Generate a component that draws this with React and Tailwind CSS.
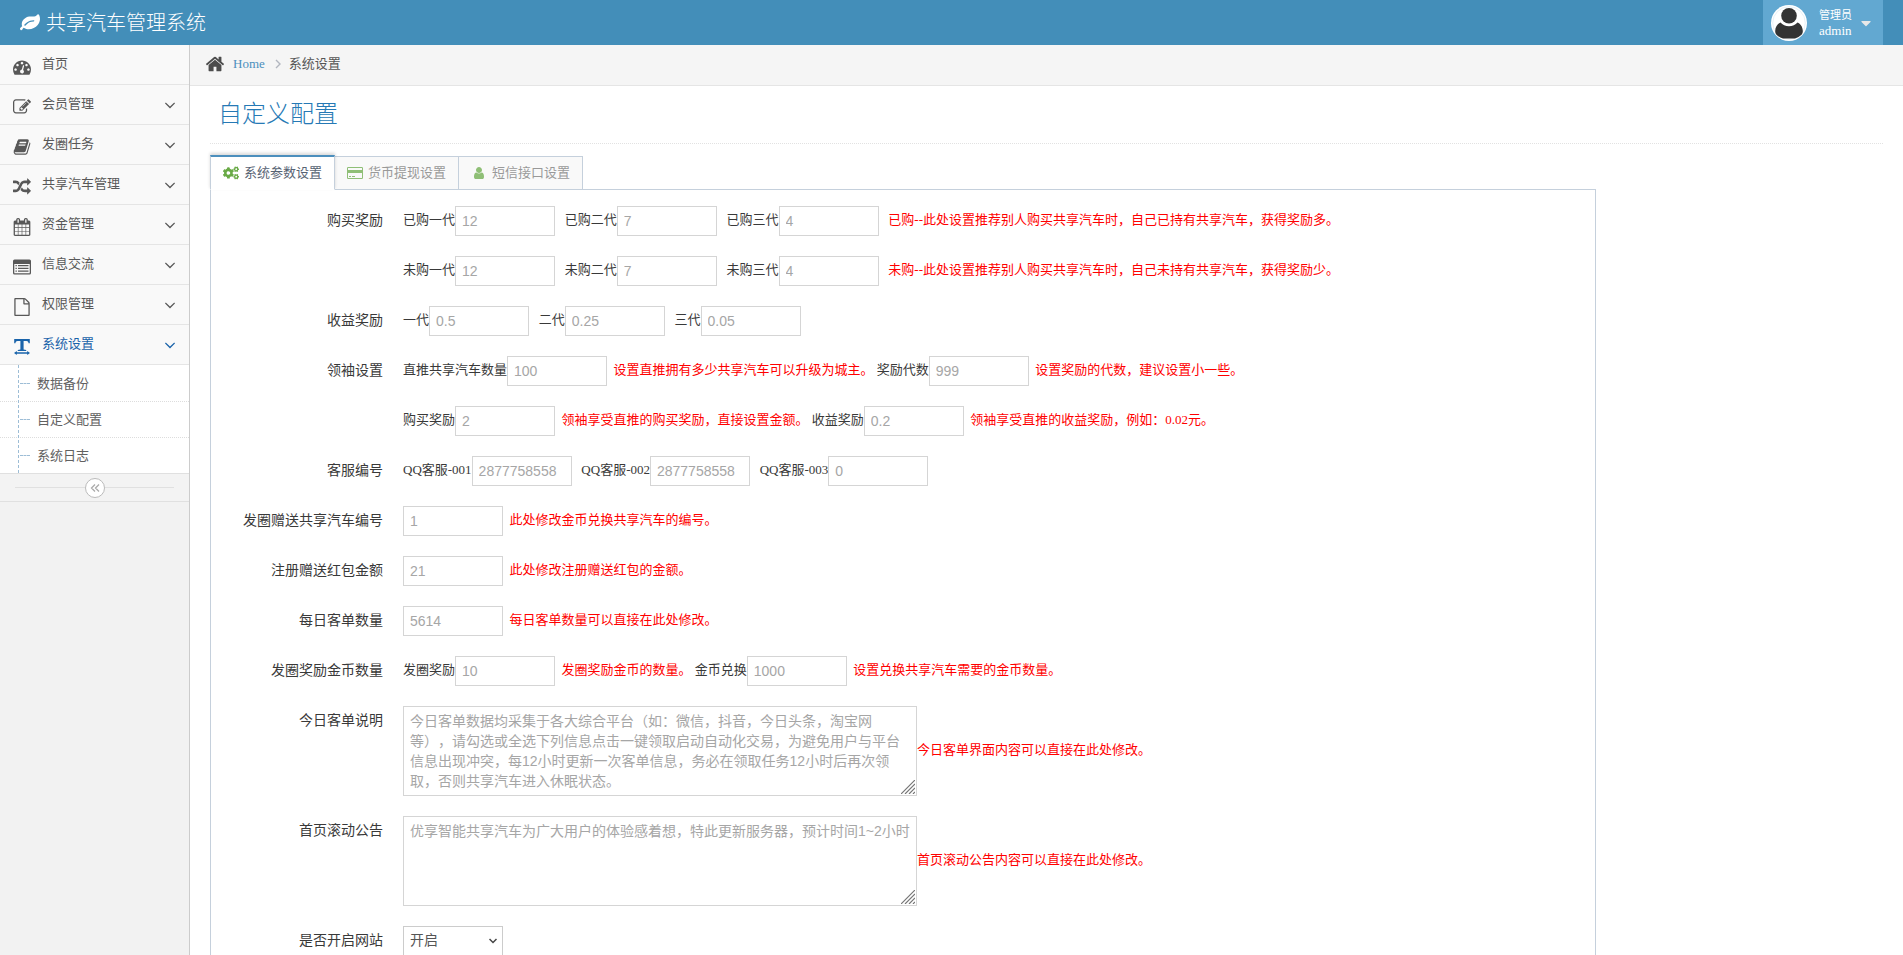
import { useState } from 'react';
import { FaCogs, FaCaretDown } from 'react-icons/fa';

const Glyph = ({ d, className, viewBox = '0 0 1792 1792' }) => (
    <svg viewBox={viewBox} fill="currentColor" className={className} aria-hidden="true">
        <path d={d} />
    </svg>
);

const paths = {
    leaf: 'M1280 704q0-26-19-45t-45-19q-172 0-318 49.5T638.5 822 403 1037q-19 21-19 45 0 26 19 45t45 19q24 0 45-19 27-24 74-71t67-66q137-124 268.5-176t313.5-52q26 0 45-19t19-45zm512-198q0 95-20 193-46 224-184.5 383T1230 1350q-214 108-438 108-148 0-286-47-15-5-88-42t-96-37q-16 0-39.5 32t-45 70-52.5 70-60 32q-43 0-63.5-17.5T15 1459q-2-4-6-11t-5.5-10-3-9.5T-1 1415q0-35 31-73.5t68-65.5 68-56 31-48q0-4-14-38t-16-44q-9-51-9-104 0-115 43.5-220t119-184.5 170.5-139T696 347q55-18 145-25.5t179.5-9 178.5-6 163.5-24T1471 220l29.5-29.5 29.5-28 27-20 36.5-16T1637 122q39 0 70.5 46t47.5 112 24 124 8 102z',
    dashboard: 'M384 1152q0-53-37.5-90.5T256 1024t-90.5 37.5T128 1152t37.5 90.5T256 1280t90.5-37.5T384 1152zm192-448q0-53-37.5-90.5T448 576t-90.5 37.5T320 704t37.5 90.5T448 832t90.5-37.5T576 704zm428 481l101-382q6-26-7.5-48.5T1059 725t-48 6.5-30 39.5l-101 382q-60 5-107 43.5t-63 98.5q-20 77 20 146t117 89 146-20 89-117q16-60-6-117t-72-91zm660-33q0-53-37.5-90.5T1536 1024t-90.5 37.5T1408 1152t37.5 90.5 90.5 37.5 90.5-37.5 37.5-90.5zm-640-640q0-53-37.5-90.5T896 384t-90.5 37.5T768 512t37.5 90.5T896 640t90.5-37.5T1024 512zm448 192q0-53-37.5-90.5T1344 576t-90.5 37.5T1216 704t37.5 90.5T1344 832t90.5-37.5T1472 704zm320 448q0 261-141 483-19 29-54 29H195q-35 0-54-29Q0 1414 0 1152q0-182 71-348t191-286 286-191 348-71 348 71 286 191 191 286 71 348z',
    edit: 'M888 1184l116-116-152-152-116 116v56h96v96h56zm440-720q-16-16-33 1L945 815q-17 17-1 33t33-1l350-350q17-17 1-33zm80 594v190q0 119-84.5 203.5T1120 1536H288q-119 0-203.5-84.5T0 1248V416q0-119 84.5-203.5T288 128h832q63 0 117 25 15 7 18 23 3 17-9 29l-49 49q-14 14-32 8-23-6-45-6H288q-66 0-113 47t-47 113v832q0 66 47 113t113 47h832q66 0 113-47t47-113v-126q0-13 9-22l64-64q15-15 35-7t20 29zm-96-738l288 288-672 672H640V992zm444 132l-92 92-288-288 92-92q28-28 68-28t68 28l152 152q28 28 28 68t-28 68z',
    book: 'M1703 478q40 57 18 129l-275 906q-19 64-76.5 107.5T1247 1664H324q-77 0-148.5-53.5T76 1479q-24-67-2-127 0-4 3-27t4-37q1-8-3-21.5t-3-19.5q2-11 8-21t16.5-23.5T116 1179q23-38 45-91.5t30-91.5q3-10 .5-30t-.5-28q3-11 17-28t17-23q21-36 42-92t25-90q1-9-2.5-32t.5-28q4-13 22-30.5t22-22.5q19-26 42.5-84.5T404 411q1-8-3-25.5t-2-26.5q2-8 9-18t18-23 17-21q8-12 16.5-30.5t15-35 16-36 19.5-32 26.5-23.5 36-11.5T620 134l-1 3q38-9 51-9h761q74 0 114 56t18 130l-274 906q-36 119-71.5 153.5T1089 1408H220q-27 0-38 15-11 16-1 43 24 70 144 70h923q29 0 56-15.5t35-41.5l300-987q7-22 5-57 38 15 59 43zm-1064 2q-4 13 2 22.5t20 9.5h608q13 0 25.5-9.5T1311 480l21-64q4-13-2-22.5t-20-9.5H702q-13 0-25.5 9.5T660 416zm-83 256q-4 13 2 22.5t20 9.5h608q13 0 25.5-9.5T1228 736l21-64q4-13-2-22.5t-20-9.5H619q-13 0-25.5 9.5T577 672z',
    random: 'M666 481q-60 92-137 273-22-45-37-72.5T451.5 618t-51-56.5-63-35T256 512H32q-14 0-23-9t-9-23V288q0-14 9-23t23-9h224q250 0 410 225zm1126 799q0 14-9 23l-320 320q-9 9-23 9-13 0-22.5-9.5T1408 1600v-192q-32 0-85 .5t-81 1-73-1-71-5-64-10.5-63-18.5-58-28.5-59-40-55-53.5-56-69.5q59-93 136-273 22 45 37 72.5t40.5 63.5 51 56.5 63 35 81.5 14.5h256V960q0-14 9-23t23-9q12 0 24 10l319 319q9 9 9 23zm0-896q0 14-9 23l-320 320q-9 9-23 9-13 0-22.5-9.5T1408 704V512h-256q-48 0-87 15t-69 45-51 61.5-45 77.5q-32 62-78 171-29 66-49.5 111t-54 105-64 100-74 83-90 68.5-106.5 42-128 16.5H32q-14 0-23-9t-9-23v-192q0-14 9-23t23-9h224q48 0 87-15t69-45 51-61.5 45-77.5q32-62 78-171 29-66 49.5-111t54-105 64-100 74-83 90-68.5 106.5-42 128-16.5h256V64q0-14 9-23t23-9q12 0 24 10l319 319q9 9 9 23z',
    calendar: 'M192 1664h288v-288H192v288zm352 0h320v-288H544v288zM192 1312h288V992H192v320zm352 0h320V992H544v320zM192 928h288V640H192v288zm736 736h320v-288H928v288zM544 928h320V640H544v288zm768 736h288v-288h-288v288zm-384-352h320V992H928v320zM576 448V160q0-13-9.5-22.5T544 128h-64q-13 0-22.5 9.5T448 160v288q0 13 9.5 22.5T480 480h64q13 0 22.5-9.5T576 448zm736 864h288V992h-288v320zM928 928h320V640H928v288zm384 0h288V640h-288v288zm32-480V160q0-13-9.5-22.5T1312 128h-64q-13 0-22.5 9.5T1216 160v288q0 13 9.5 22.5t22.5 9.5h64q13 0 22.5-9.5t9.5-22.5zm384-64v1280q0 52-38 90t-90 38H192q-52 0-90-38t-38-90V384q0-52 38-90t90-38h128v-96q0-66 47-113t113-47h64q66 0 113 47t47 113v96h384v-96q0-66 47-113t113-47h64q66 0 113 47t47 113v96h128q52 0 90 38t38 90z',
    file: 'M1596 380q28 28 48 76t20 88v1152q0 40-28 68t-68 28H224q-40 0-68-28t-28-68V96q0-40 28-68t68-28h896q40 0 88 20t76 48zm-444-244v376h376q-10-29-22-41l-313-313q-12-12-41-22zm384 1528V640h-416q-40 0-68-28t-28-68V128H256v1536h1280z',
    home: 'M1472 992v480q0 26-19 45t-45 19h-384v-384H768v384H384q-26 0-45-19t-19-45V992q0-1 .5-3t.5-3l575-474 575 474q1 2 1 6zm223-69l-62 74q-8 9-21 11h-3q-13 0-21-7L896 424l-692 577q-12 8-24 7-13-2-21-11l-62-74q-8-10-7-23.5t11-21.5l719-599q32-26 76-26t76 26l244 204V288q0-14 9-23t23-9h192q14 0 23 9t9 23v408l219 182q10 8 11 21.5t-7 23.5z',
    user: 'M1536 1399q0 109-62.5 187t-150.5 78H469q-88 0-150.5-78T256 1399q0-85 8.5-160.5t31.5-152 58.5-131 94-89T583 832q131 128 313 128t313-128q76 0 134.5 34.5t94 89 58.5 131 31.5 152 8.5 160.5zm-256-887q0 159-112.5 271.5T896 896 624.5 783.5 512 512t112.5-271.5T896 128t271.5 112.5T1280 512z',
    angleDown: 'M1395 736q0 13-10 23l-466 466q-10 10-23 10t-23-10L407 759q-10-10-10-23t10-23l50-50q10-10 23-10t23 10l393 393 393-393q10-10 23-10t23 10l50 50q10 10 10 23z',
};

const ListAlt = ({ className }) => (
    <svg viewBox="0 0 18 18" fill="currentColor" className={className} aria-hidden="true">
        <path fillRule="evenodd" d="M1.5 1.5h15a1.5 1.5 0 0 1 1.5 1.5v12a1.5 1.5 0 0 1-1.5 1.5h-15A1.5 1.5 0 0 1 0 15V3a1.5 1.5 0 0 1 1.5-1.5zM1.3 6v9.2h15.4V6z" />
        <path d="M2.5 7h1.3v1.3H2.5zM2.5 9.7h1.3V11H2.5zM2.5 12.4h1.3v1.3H2.5zM5 7h10.5v1.3H5zM5 9.7h10.5V11H5zM5 12.4h10.5v1.3H5z" />
    </svg>
);

const CreditCard = ({ className }) => (
    <svg viewBox="0 0 16 12" fill="currentColor" className={className} aria-hidden="true">
        <path fillRule="evenodd" d="M1.2 0h13.6A1.2 1.2 0 0 1 16 1.2v9.6a1.2 1.2 0 0 1-1.2 1.2H1.2A1.2 1.2 0 0 1 0 10.8V1.2A1.2 1.2 0 0 1 1.2 0zM1 1v2h14V1zM1 6v5h14V6z" />
        <path d="M2 9h2v1H2zM5 9h3v1H5z" />
    </svg>
);

const TextWidth = ({ className }) => (
    <svg viewBox="0 0 18 18" fill="currentColor" className={className} aria-hidden="true">
        <path d="M1.200 1h15.600v4.300h-1.200c-.3-1.700-.8-2.400-2.200-2.400h-2.800v8.600l2.600.6v1H4.800v-1l2.600-.6V2.900H4.600c-1.400 0-1.900.7-2.200 2.400H1.200z" />
        <path d="M1 15l2.800-2.100v1.400h10.400v-1.400L17 15l-2.800 2.100v-1.400H3.800v1.400z" />
    </svg>
);

const icon = (name) => ({ className }) => <Glyph d={paths[name]} className={className} />;

const menu = [
    { text: '首页', Icon: icon('dashboard'), leaf: true },
    { text: '会员管理', Icon: icon('edit') },
    { text: '发圈任务', Icon: icon('book') },
    { text: '共享汽车管理', Icon: icon('random') },
    { text: '资金管理', Icon: icon('calendar') },
    { text: '信息交流', Icon: ListAlt },
    { text: '权限管理', Icon: icon('file') },
    { text: '系统设置', Icon: TextWidth, active: true },
];

const submenu = ['数据备份', '自定义配置', '系统日志'];

const tabs = [
    { text: '系统参数设置', Icon: FaCogs, size: 'w-4 h-4' },
    { text: '货币提现设置', Icon: CreditCard, size: 'w-4 h-3' },
    { text: '短信接口设置', Icon: icon('user'), size: 'w-4 h-3.5' },
];

const Navbar = () => (
    <header className="flex h-[45px] shrink-0 items-stretch justify-between bg-[#438eb9] pr-5 text-white">
        <a href="#" className="flex items-center pl-5 text-[20px] font-light">
            <Glyph d={paths.leaf} className="mr-1.5 h-5 w-5" />
            共享汽车管理系统
        </a>
        <button type="button" className="flex w-[120px] items-center bg-[#62a8d1] pl-2 text-left">
            <svg viewBox="0 0 36 36" className="h-9 w-9" aria-hidden="true">
                <circle cx="18" cy="18" r="18" fill="#fff" />
                <circle cx="18" cy="18" r="16.3" fill="none" stroke="#d6e6f0" strokeWidth=".6" />
                <circle cx="18" cy="10.8" r="7.8" fill="#333" />
                <path d="M9.5 17.5c2 2.400 5 3.800 8.500 3.800s6.500-1.400 8.500-3.800c3 1.200 5.300 4.500 5.300 8.500 0 1.600-.4 2.800-1.300 3.700A17 17 0 0 1 24 33.500H12a17 17 0 0 1-6.500-3.800c-.9-.9-1.300-2.100-1.300-3.700 0-4 2.300-7.300 5.300-8.500z" fill="#333" />
            </svg>
            <span className="ml-3 leading-[15px]">
                <small className="block text-[11px]">管理员</small>
                admin
            </span>
            <FaCaretDown className="ml-1.5 h-4 w-4 text-[#e8e8e8]" />
        </button>
    </header>
);

const Sidebar = () => (
    <aside className="w-[190px] shrink-0 border-r border-[#ccc] bg-[#f2f2f2]">
        <ul>
            {menu.map(({ text, Icon, leaf, active }) => (
                <li key={text}>
                    <a
                        href="#"
                        className={`flex h-10 items-center border-b border-[#e5e5e5] bg-[#f9f9f9] pr-2.5 pl-[13px] ${
                            active ? 'text-[#1963aa]' : 'text-[#585858]'
                        }`}
                    >
                        <Icon className="mt-1 mr-[11px] h-[18px] w-[18px]" />
                        <span className="flex-1 pb-0.5">{text}</span>
                        {!leaf && <Glyph d={paths.angleDown} className="h-[18px] w-[18px]" />}
                    </a>
                </li>
            ))}
        </ul>
        <ul className="relative bg-white">
            {submenu.map((text) => (
                <li key={text} className="border-t border-dotted border-[#ddd] first:border-transparent">
                    <a href="#" className="flex h-[35px] items-center pl-5 text-[#616161]">
                        <span className="mr-[7px] w-2.5 border-t border-dashed border-[#9dbdd6]" />
                        {text}
                    </a>
                </li>
            ))}
            <li className="absolute inset-y-0 left-[18px] border-l border-dashed border-[#9dbdd6]" aria-hidden="true" />
        </ul>
        <div className="flex h-[29px] items-center border-y border-[#e0e0e0] bg-[#f3f3f3] px-[15px]">
            <span className="flex-1 border-t border-[#e0e0e0]" />
            <button
                type="button"
                aria-label="collapse"
                className="flex h-5 w-5 items-center justify-center rounded-full border border-[#bbb] bg-white text-[#aaa]"
            >
                <svg viewBox="0 0 10 10" className="h-2.5 w-2.5" fill="none" stroke="currentColor" strokeWidth="1.3">
                    <path d="M5 1.500 1.500 5 5 8.500M9 1.500 5.500 5 9 8.500" />
                </svg>
            </button>
            <span className="flex-1 border-t border-[#e0e0e0]" />
        </div>
    </aside>
);

const Field = ({ id, label, value }) => (
    <>
        {label && <label htmlFor={id}>{label}</label>}
        <input
            id={id}
            type="text"
            defaultValue={value}
            className="h-[30px] w-[100px] border border-[#d5d5d5] bg-white px-1.5 align-middle font-['Liberation_Sans','Noto_Sans_CJK_SC',sans-serif] text-[14px] text-[#a6a6a6]"
        />
    </>
);

const Area = ({ id, value }) => (
    <span className="relative inline-block align-middle">
        <textarea
            id={id}
            defaultValue={value}
            className="block h-[90px] w-[514px] resize-none overflow-hidden border border-[#d5d5d5] bg-white px-1.5 py-1 font-['Liberation_Sans','Noto_Sans_CJK_SC',sans-serif] text-[14px] leading-5 text-[#a6a6a6] [text-spacing-trim:space-all]"
        />
        <svg viewBox="0 0 14 14" className="absolute right-0.5 bottom-0.5 h-3.5 w-3.5" stroke="#777" strokeWidth="1.2" aria-hidden="true">
            <path d="M0 14 14 0M4 14 14 4M8 14l6-6M12 14l2-2" />
        </svg>
    </span>
);

const Hint = ({ children }) => <span className="text-[#f00]">{children}</span>;

const Row = ({ label, htmlFor, children }) => (
    <div className="mb-5 flex items-start gap-5">
        {htmlFor ? (
            <label htmlFor={htmlFor} className="w-40 shrink-0 text-right text-[14px] leading-[30px]">{label}</label>
        ) : (
            <span className="w-40 shrink-0 text-right text-[14px] leading-[30px]">{label}</span>
        )}
        <div className="flex-1 leading-5">{children}</div>
    </div>
);

const SettingsForm = () => (
    <form className="px-3 pt-4 pb-2" onSubmit={(e) => e.preventDefault()}>
        <Row label="购买奖励">
            <Field id="buy1" label="已购一代" value="12" />&nbsp;&nbsp;&nbsp;
            <Field id="buy2" label="已购二代" value="7" />&nbsp;&nbsp;&nbsp;
            <Field id="buy3" label="已购三代" value="4" />&nbsp;&nbsp;&nbsp;
            <Hint>已购--此处设置推荐别人购买共享汽车时，自己已持有共享汽车，获得奖励多。</Hint>
        </Row>
        <Row>
            <Field id="nobuy1" label="未购一代" value="12" />&nbsp;&nbsp;&nbsp;
            <Field id="nobuy2" label="未购二代" value="7" />&nbsp;&nbsp;&nbsp;
            <Field id="nobuy3" label="未购三代" value="4" />&nbsp;&nbsp;&nbsp;
            <Hint>未购--此处设置推荐别人购买共享汽车时，自己未持有共享汽车，获得奖励少。</Hint>
        </Row>
        <Row label="收益奖励">
            <Field id="income1" label="一代" value="0.5" />&nbsp;&nbsp;&nbsp;
            <Field id="income2" label="二代" value="0.25" />&nbsp;&nbsp;&nbsp;
            <Field id="income3" label="三代" value="0.05" />
        </Row>
        <Row label="领袖设置">
            <Field id="leaderCars" label="直推共享汽车数量" value="100" />&nbsp;{' '}
            <Hint>设置直推拥有多少共享汽车可以升级为城主。</Hint>{' '}
            <Field id="leaderDepth" label="奖励代数" value="999" />&nbsp;{' '}
            <Hint>设置奖励的代数，建议设置小一些。</Hint>
        </Row>
        <Row>
            <Field id="leaderBuy" label="购买奖励" value="2" />&nbsp;{' '}
            <Hint>领袖享受直推的购买奖励，直接设置金额。</Hint>{' '}
            <Field id="leaderIncome" label="收益奖励" value="0.2" />&nbsp;{' '}
            <Hint>领袖享受直推的收益奖励，例如：0.02元。</Hint>
        </Row>
        <Row label="客服编号">
            <Field id="qq1" label="QQ客服-001" value="2877758558" />&nbsp;&nbsp;&nbsp;
            <Field id="qq2" label="QQ客服-002" value="2877758558" />&nbsp;&nbsp;&nbsp;
            <Field id="qq3" label="QQ客服-003" value="0" />
        </Row>
        <Row label="发圈赠送共享汽车编号" htmlFor="giftCar">
            <Field id="giftCar" value="1" />&nbsp;{' '}
            <Hint>此处修改金币兑换共享汽车的编号。</Hint>
        </Row>
        <Row label="注册赠送红包金额" htmlFor="redPacket">
            <Field id="redPacket" value="21" />&nbsp;{' '}
            <Hint>此处修改注册赠送红包的金额。</Hint>
        </Row>
        <Row label="每日客单数量" htmlFor="dailyOrders">
            <Field id="dailyOrders" value="5614" />&nbsp;{' '}
            <Hint>每日客单数量可以直接在此处修改。</Hint>
        </Row>
        <Row label="发圈奖励金币数量">
            <Field id="coinReward" label="发圈奖励" value="10" />&nbsp;{' '}
            <Hint>发圈奖励金币的数量。</Hint>{' '}
            <Field id="coinExchange" label="金币兑换" value="1000" />&nbsp;{' '}
            <Hint>设置兑换共享汽车需要的金币数量。</Hint>
        </Row>
        <Row label="今日客单说明" htmlFor="orderNote">
            <Area
                id="orderNote"
                value="今日客单数据均采集于各大综合平台（如：微信，抖音，今日头条，淘宝网等），请勾选或全选下列信息点击一键领取启动自动化交易，为避免用户与平台信息出现冲突，每12小时更新一次客单信息，务必在领取任务12小时后再次领取，否则共享汽车进入休眠状态。"
            />
            <Hint>今日客单界面内容可以直接在此处修改。</Hint>
        </Row>
        <Row label="首页滚动公告" htmlFor="notice">
            <Area id="notice" value="优享智能共享汽车为广大用户的体验感着想，特此更新服务器，预计时间1~2小时" />
            <Hint>首页滚动公告内容可以直接在此处修改。</Hint>
        </Row>
        <Row label="是否开启网站" htmlFor="siteOpen">
            <span className="relative inline-block align-middle">
                <select
                    id="siteOpen"
                    className="block h-[30px] w-[100px] appearance-none border border-[#ccc] bg-white px-1.5 text-[14px] text-[#555]"
                >
                    <option>开启</option>
                    <option>关闭</option>
                </select>
                <svg viewBox="0 0 8 6" className="pointer-events-none absolute top-3 right-1.5 h-1.5 w-2" fill="none" stroke="#444" strokeWidth="1.5" aria-hidden="true">
                    <path d="m.5 1 3.500 3.500L7.500 1" />
                </svg>
            </span>
        </Row>
    </form>
);

const App = () => {
    const [current, setCurrent] = useState(0);

    return (
        <div className="flex h-screen flex-col overflow-hidden bg-white font-['Liberation_Serif','Noto_Sans_CJK_SC',serif] text-[13px] leading-5 text-[#393939]">
            <Navbar />
            <div className="flex flex-1">
                <Sidebar />
                <main className="min-w-0 flex-1">
                    <nav className="flex h-[41px] items-center border-b border-[#e5e5e5] bg-[#f5f5f5] pb-0.5 pl-[15px]">
                        <Glyph d={paths.home} className="h-5 w-5 text-[#4c4c4c]" />
                        <a href="#" className="ml-2 text-[#4c8fbd]">Home</a>
                        <svg viewBox="0 0 6 10" className="mr-2 ml-2.5 h-2.5 w-1.5" fill="none" stroke="#b2b6bf" strokeWidth="1.4" aria-hidden="true">
                            <path d="m1 1 4 4-4 4" />
                        </svg>
                        <span className="text-[#555]">系统设置</span>
                    </nav>
                    <div className="px-5">
                        <h1 className="mb-[11px] border-b border-dotted border-[#e2e2e2] px-2 pt-2 pb-[9px] text-[24px] leading-10 font-light text-[#2679b5]">
                            自定义配置
                        </h1>
                        <div className="w-10/12 pr-2">
                            <div className="flex items-end" role="tablist">
                                {tabs.map(({ text, Icon, size }, i) => (
                                    <button
                                        key={text}
                                        type="button"
                                        role="tab"
                                        aria-selected={i === current}
                                        onClick={() => setCurrent(i)}
                                        className={`relative -mb-px flex items-center gap-[5px] border px-3 ${
                                            i === current
                                                ? 'z-10 h-[35px] border-t-2 border-[#c5d0dc] border-t-[#4c8fbd] border-b-white bg-white text-[#576373] shadow-[0_-2px_3px_0_rgba(0,0,0,0.15)]'
                                                : '-ml-px h-[34px] border-[#c5d0dc] bg-[#f9f9f9] text-[#999]'
                                        }`}
                                    >
                                        <Icon className={`${size} ${i === current ? 'text-[#69aa46]' : 'text-[#8fbf76]'}`} />
                                        {text}
                                    </button>
                                ))}
                            </div>
                            <div className="border border-[#c5d0dc]">
                                <SettingsForm />
                            </div>
                        </div>
                    </div>
                </main>
            </div>
        </div>
    );
};

export default App;
